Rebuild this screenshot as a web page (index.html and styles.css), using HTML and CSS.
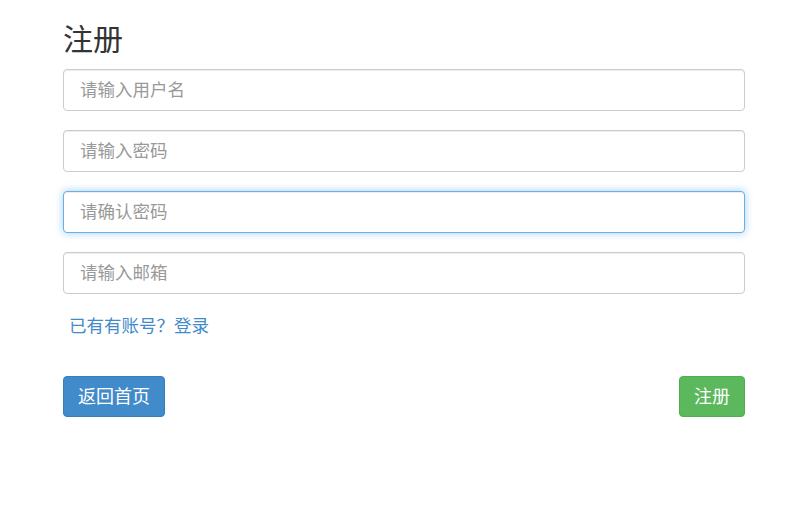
FILE: index.html
```html
<!DOCTYPE html>
<html lang="zh-CN">
<head>
<meta charset="utf-8">
<title>注册</title>
<link rel="stylesheet" href="styles.css">
</head>
<body>
<div class="page">
  <h2 class="title">注册</h2>
  <form class="form">
    <input class="field" type="text" placeholder="请输入用户名">
    <input class="field" type="password" placeholder="请输入密码">
    <input class="field is-focus" type="password" placeholder="请确认密码">
    <input class="field" type="email" placeholder="请输入邮箱">
    <a class="login-link" href="#">已有有账号？登录</a>
    <div class="actions">
      <button type="button" class="btn btn-primary">返回首页</button>
      <button type="button" class="btn btn-success">注册</button>
    </div>
  </form>
</div>
</body>
</html>
```
FILE: styles.css
```css
html, body {
  margin: 0;
  padding: 0;
  background: #fff;
}
body {
  font-family: "Noto Sans CJK SC", "Noto Sans", sans-serif;
  color: #333;
}
.page {
  width: 682px;
  padding: 20px 0 0 63px;
}
.title {
  margin: 0;
  font-size: 30px;
  line-height: 34px;
  font-weight: 400;
  color: #333;
}
.form {
  display: flex;
  flex-direction: column;
  margin-top: 15px;
}
.field {
  box-sizing: border-box;
  height: 42px;
  width: 100%;
  margin: 0 0 19px 0;
  padding: 0 16px 4px 16px;
  border: 1px solid #ccc;
  border-radius: 4px;
  font-family: inherit;
  font-size: 17.5px;
  color: #555;
  background: #fff;
  box-shadow: inset 0 1px 1px rgba(0,0,0,.075);
  outline: none;
}
.field::placeholder {
  color: #999;
}
.is-focus {
  border-color: #66afe9;
  box-shadow: inset 0 1px 1px rgba(0,0,0,.075), 0 0 8px rgba(102,175,233,.6);
}
.login-link {
  margin: 0 0 0 6px;
  font-size: 17.5px;
  line-height: 24px;
  color: #428bca;
  text-decoration: none;
}
.actions {
  display: flex;
  justify-content: space-between;
  margin-top: 39px;
}
.btn {
  box-sizing: border-box;
  height: 41px;
  padding: 0 14px 3px 14px;
  border: 1px solid transparent;
  border-radius: 4px;
  font-family: inherit;
  font-size: 18px;
  line-height: 36px;
  color: #fff;
  cursor: pointer;
}
.btn-primary {
  background: #428bca;
  border-color: #357ebd;
}
.btn-success {
  background: #5cb85c;
  border-color: #4cae4c;
}
```
